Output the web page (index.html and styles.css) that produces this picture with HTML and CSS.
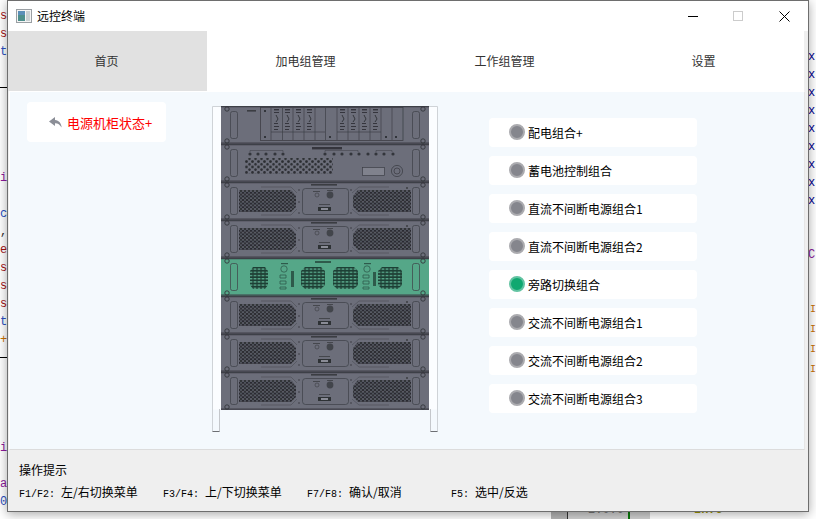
FILE: index.html
```html
<!DOCTYPE html>
<html lang="zh-CN">
  <head>
    <meta charset="UTF-8" />
    <title>远控终端</title>
    <link rel="stylesheet" href="styles.css">
  </head>
  <body>
    <!-- Editor text showing behind the window -->
    <pre class="code code-left"><span class="c-red">s
s</span>
<span class="c-blue">t</span>

<span class="c-rule"></span>




<span class="c-purple">i</span>

<span class="c-blue">c</span>
,
<span class="c-red">e
s
s
s</span>
<span class="c-blue">t</span>
<span class="c-orange">+</span>
<span class="c-rule"></span>




<span class="c-purple">i</span>

<span class="c-purple">a</span>
<span class="c-blue">0</span></pre>
    <pre class="code code-right"><span class="c-navy">x
x
x
x
x
x
x
x
x</span>


<span class="c-purple">C</span></pre>
    <pre class="code code-far"><span class="c-orange">I
I
I
I</span></pre>
    <div class="taskstrip">
      <div class="strip-gray"></div>
      <div class="strip-cell">2.0.0</div>
      <div class="strip-tail"></div>
      <div class="strip-info">Info</div>
    </div>

    <div class="window">
      <!-- Title bar -->
      <div class="titlebar">
        <svg class="app-icon" width="16" height="14" viewBox="0 0 16 14">
          <rect x="0.5" y="0.5" width="15" height="13" fill="#f4f4f4" stroke="#9a9fa3" />
          <rect x="2" y="2" width="7" height="10" fill="#4d8f8c" />
          <rect x="2" y="2" width="7" height="4" fill="#5a8fb8" />
          <rect x="10" y="2" width="4" height="10" fill="#c9d0d2" />
        </svg>
        <span class="app-title">远控终端</span>
        <div class="controls">
          <svg class="ctl-min" width="10" height="1" viewBox="0 0 10 1"><rect width="10" height="1" fill="#000" /></svg>
          <svg class="ctl-max" width="10" height="10" viewBox="0 0 10 10"><rect x="0.5" y="0.5" width="9" height="9" fill="none" stroke="#ccc" /></svg>
          <svg class="ctl-close" width="11" height="11" viewBox="0 0 11 11"><path d="M0.5 0.5L10.5 10.5M10.5 0.5L0.5 10.5" stroke="#000" fill="none" /></svg>
        </div>
      </div>

      <!-- Tabs -->
      <div class="tabs">
        <div class="tab active">首页</div>
        <div class="tab">加电组管理</div>
        <div class="tab">工作组管理</div>
        <div class="tab">设置</div>
      </div>

      <!-- Main panel -->
      <div class="main">
        <div class="back-card">
          <svg class="back-icon" width="13" height="11" viewBox="0 0 13 11">
            <path d="M6 0L0 4.6L6 9V6.3C8.8 6.2 10.8 7.6 12.6 10.6C12.4 6.2 10 3.2 6 2.9Z" fill="#8b8e97" />
          </svg>
          <span>电源机柜状态+</span>
        </div>

        <svg class="rack" width="226" height="326" viewBox="212 106 226 326">
          <defs>
            <pattern id="holes" width="4" height="3.6" patternUnits="userSpaceOnUse">
              <rect width="4" height="3.6" fill="#5a5c66" />
              <circle cx="2" cy="1.8" r="1.5" fill="none" stroke="#26282c" stroke-width="0.9" />
              <circle cx="2" cy="1.8" r="0.4" fill="#8b8d98" />
            </pattern>
            <pattern id="holes-green" width="4" height="3.2" patternUnits="userSpaceOnUse">
              <rect width="4" height="3.2" fill="#1f3f35" />
              <rect x="0.6" y="0.8" width="2.8" height="1.4" fill="#56a688" />
            </pattern>
            <pattern id="mesh" width="6" height="5.4" patternUnits="userSpaceOnUse">
              <circle cx="1.5" cy="1.35" r="1.35" fill="#2c2e33" />
              <circle cx="4.5" cy="4.05" r="1.35" fill="#2c2e33" />
            </pattern>

            <symbol id="frame" width="208" height="38" viewBox="0 0 208 38">
              <path d="M0 0.6H208M0 37.2H208" stroke="#3d3f46" stroke-width="1.2" />
              <rect x="9.5" y="5.5" width="7" height="27" rx="2" fill="none" stroke="#3d3f46" stroke-width="0.7" />
              <rect x="191.5" y="5.5" width="7" height="27" rx="2" fill="none" stroke="#3d3f46" stroke-width="0.7" />
              <g fill="none" stroke="#33353b" stroke-width="0.9">
                <circle cx="6" cy="3" r="2.2" />
                <circle cx="6" cy="35" r="2.2" />
                <circle cx="202" cy="3" r="2.2" />
                <circle cx="202" cy="35" r="2.2" />
              </g>
            </symbol>

            <symbol id="ups" width="208" height="38" viewBox="0 0 208 38">
              <use href="#frame" />
              <polygon points="18,8 70,8 75,14 75,25 70,30 18,30" fill="url(#holes)" />
              <polygon points="190,8 137,8 132,14 132,25 137,30 190,30" fill="url(#holes)" />
              <path d="M40 5H70L76 11M40 33H70L76 27M168 5H138L131 11M168 33H138L131 27" fill="none" stroke="#44464e" stroke-width="0.5" />
              <rect x="81.5" y="6.5" width="46" height="26" rx="3" fill="none" stroke="#3d3f46" stroke-width="0.7" />
              <rect x="90" y="2" width="26" height="1.6" fill="#3a3c43" />
              <circle cx="96" cy="13" r="2" fill="none" stroke="#3a3c43" stroke-width="0.6" />
              <circle cx="109" cy="13" r="3.4" fill="#43454c" />
              <rect x="92" y="9" width="7" height="1" fill="#44464d" />
              <rect x="106" y="8" width="6" height="1" fill="#44464d" />
              <rect x="98" y="22" width="11" height="1" fill="#44464d" />
              <rect x="97" y="25" width="13" height="4" fill="#2f3136" />
              <rect x="100" y="26" width="7" height="2" fill="#8a8c96" />
              <g fill="#3a3c43">
                <circle cx="78" cy="8" r="0.8" />
                <circle cx="78" cy="20" r="0.8" />
                <circle cx="78" cy="31" r="0.8" />
                <circle cx="130" cy="8" r="0.8" />
                <circle cx="130" cy="31" r="0.8" />
                <circle cx="186" cy="6" r="1" />
              </g>
            </symbol>

            <symbol id="slot" width="11" height="26" viewBox="0 0 11 26">
              <g fill="#34363c">
                <rect x="3" y="2" width="5" height="1.4" />
                <rect x="3" y="5" width="5" height="1" />
                <path d="M5 8L7 12L5 15" stroke="#34363c" stroke-width="1" fill="none" />
                <rect x="3" y="16" width="4" height="1" />
                <rect x="3" y="19" width="5" height="1" />
                <rect x="3" y="22" width="4" height="1" />
              </g>
            </symbol>
          </defs>

          <!-- Uprights and feet -->
          <rect x="212.5" y="106.5" width="225" height="303" fill="#fbfdff" />
          <path d="M212.5 431.5V106.5H437.5V431.5" fill="none" stroke="#cfd3d7" />
          <path d="M219.5 431.5V409M430.5 431.5V409" fill="none" stroke="#c4c7cb" />
          <path d="M212.5 431.5H219.5M430.5 431.5H437.5" fill="none" stroke="#6d6f73" />

          <g filter="url(#soft)">
            <rect x="221" y="106" width="208" height="304" fill="#6c6e7a" />

            <!-- Row 1: feeder modules -->
            <g transform="translate(221 106)">
              <use href="#frame" />
              <rect x="26" y="4" width="9" height="1.6" fill="#3a3c43" />
              <rect x="39.5" y="1.5" width="142.5" height="33" fill="none" stroke="#3d3f46" stroke-width="0.8" />
              <path d="M50 2V34M61.5 2V34M72 2V34M83 2V34M94 2V34M104.5 2V34M116 2V34M127 2V34M138 2V34M149 2V34M160 2V34M171 2V34" stroke="#3d3f46" stroke-width="0.7" />
              <path d="M50 26H104M116 26H160" stroke="#3d3f46" stroke-width="0.7" />
              <use href="#slot" x="50" y="1" />
              <use href="#slot" x="61" y="1" />
              <use href="#slot" x="72" y="1" />
              <use href="#slot" x="83" y="1" />
              <use href="#slot" x="116" y="1" />
              <use href="#slot" x="127" y="1" />
              <use href="#slot" x="138" y="1" />
              <use href="#slot" x="149" y="1" />
              <rect x="43" y="30" width="2" height="2" fill="#33353b" />
              <rect x="43" y="4" width="2" height="2" fill="#33353b" />
              <rect x="108" y="30" width="2" height="2" fill="#33353b" />
              <rect x="164" y="30" width="2" height="2" fill="#33353b" />
              <rect x="174" y="30" width="2" height="2" fill="#33353b" />
            </g>

            <!-- Row 2: battery control -->
            <g transform="translate(221 144)">
              <use href="#frame" />
              <rect x="91" y="3" width="30" height="2.4" fill="#34363c" />
              <path d="M29 8V6.5H62V8M104 8V6.5H137V8M155 8V6.5H171V8" fill="none" stroke="#3d3f46" stroke-width="0.5" />
              <g fill="#33353b">
                <circle cx="29" cy="10" r="1.6" />
                <circle cx="37" cy="10" r="1.6" />
                <circle cx="45" cy="10" r="1.6" />
                <circle cx="54" cy="10" r="1.6" />
                <circle cx="62" cy="10" r="1.6" />
                <circle cx="104" cy="10" r="1.6" />
                <circle cx="113" cy="10" r="1.6" />
                <circle cx="121" cy="10" r="1.6" />
                <circle cx="130" cy="10" r="1.6" />
                <circle cx="138" cy="10" r="1.6" />
                <circle cx="147" cy="10" r="1.6" />
                <circle cx="155" cy="10" r="1.6" />
                <circle cx="163" cy="10" r="1.6" />
                <circle cx="172" cy="10" r="1.6" />
              </g>
              <rect x="24" y="14" width="88" height="16" fill="url(#mesh)" />
              <rect x="141.5" y="23.5" width="22" height="8" fill="#80828d" stroke="#3d3f46" stroke-width="0.7" />
              <circle cx="176" cy="27" r="5.6" fill="none" stroke="#3d3f46" stroke-width="0.8" />
              <circle cx="176" cy="27" r="3" fill="none" stroke="#3d3f46" stroke-width="0.8" />
            </g>

            <use href="#ups" x="221" y="182" />
            <use href="#ups" x="221" y="220" />

            <!-- Row 5: the selected bypass unit -->
            <g transform="translate(221 258)">
              <rect width="208" height="38" fill="#55a788" />
              <use href="#frame" />
              <rect x="94" y="3" width="16" height="2" fill="#2f5a4c" />
              <polygon points="32,9 44,9 47,13 47,27 44,31 32,31 29,27 29,13" fill="url(#holes-green)" />
              <polygon points="84,9 100,9 104,13 104,27 100,31 84,31 80,27 80,13" fill="url(#holes-green)" />
              <polygon points="116,9 133,9 137,13 137,27 133,31 116,31 112,27 112,13" fill="url(#holes-green)" />
              <polygon points="161,9 177,9 181,13 181,27 177,31 161,31 157,27 157,13" fill="url(#holes-green)" />
              <g fill="none" stroke="#2f5a4c" stroke-width="0.8">
                <circle cx="63" cy="11" r="3.2" />
                <circle cx="146" cy="11" r="3.2" />
                <path d="M59 17h6v3h-6zM59 23h6v3h-6zM59 29h6v2h-6zM142 17h6v3h-6zM142 23h6v3h-6zM142 29h6v2h-6z" />
              </g>
              <g fill="#2f5a4c">
                <rect x="70" y="13" width="3" height="16" />
                <rect x="152" y="14" width="3" height="14" />
                <rect x="60" y="5" width="7" height="1.2" />
                <rect x="143" y="5" width="7" height="1.2" />
              </g>
            </g>

            <use href="#ups" x="221" y="296" />
            <use href="#ups" x="221" y="334" />
            <use href="#ups" x="221" y="372" />
          </g>
          <filter id="soft" x="0" y="0" width="100%" height="100%">
            <feGaussianBlur stdDeviation="0.5" />
          </filter>
        </svg>

        <div class="groups">
          <div class="group"><i class="dot"></i>配电组合+</div>
          <div class="group"><i class="dot"></i>蓄电池控制组合</div>
          <div class="group"><i class="dot"></i>直流不间断电源组合1</div>
          <div class="group"><i class="dot"></i>直流不间断电源组合2</div>
          <div class="group"><i class="dot on"></i>旁路切换组合</div>
          <div class="group"><i class="dot"></i>交流不间断电源组合1</div>
          <div class="group"><i class="dot"></i>交流不间断电源组合2</div>
          <div class="group"><i class="dot"></i>交流不间断电源组合3</div>
        </div>
      </div>

      <!-- Key hints -->
      <div class="hints">
        <div class="hints-title">操作提示</div>
        <div class="hints-row">
          <div><span class="key">F1/F2: </span>左/右切换菜单</div>
          <div><span class="key">F3/F4: </span>上/下切换菜单</div>
          <div><span class="key">F7/F8: </span>确认/取消</div>
          <div><span class="key">F5: </span>选中/反选</div>
        </div>
      </div>
    </div>
  </body>
</html>
```

FILE: styles.css
```css
/* General styles */
html,
body {
  margin: 0;
  height: 100%;
  overflow: hidden;
  background-color: #fff;
}

body {
  font-family: "Noto Sans CJK SC", "Liberation Sans", sans-serif;
  font-size: 12px;
  color: #000;
}

/* Editor text behind the window */
.code {
  position: absolute;
  margin: 0;
  font-family: "Liberation Mono", monospace;
  font-size: 12px;
  line-height: 18px;
  color: #333;
}

.code-left {
  left: 0;
  top: 7px;
}

.code-right {
  left: 808px;
  top: 48px;
}

.code-far {
  left: 810px;
  top: 300px;
  font-size: 10px;
  line-height: 20px;
}

.c-red {
  color: #a31515;
}

.c-blue {
  color: #2a4fc0;
}

.c-navy {
  color: #00008b;
}

.c-purple {
  color: #8b1a9b;
}

.c-orange {
  color: #c87000;
}

.c-rule {
  display: inline-block;
  width: 7px;
  border-bottom: 1px solid #000;
  vertical-align: middle;
}

/* Status strip peeking out under the window */
.taskstrip {
  position: absolute;
  left: 551px;
  top: 503px;
  height: 16px;
  display: flex;
}

.strip-gray {
  width: 16px;
  background-color: #b4b4b4;
  border-right: 1px solid #333;
}

.strip-cell {
  width: 62px;
  padding-left: 20px;
  box-sizing: border-box;
  background-color: #d0d0d0;
  border-right: 2px solid #0a7a0a;
  font-family: "Liberation Mono", monospace;
  font-size: 12px;
  color: #777;
}

.strip-tail {
  width: 20px;
  background-color: #d0d0d0;
}

.strip-info {
  margin-left: 44px;
  font-family: "Liberation Mono", monospace;
  font-size: 12px;
  font-weight: bold;
  color: #a09a00;
}

/* Window */
.window {
  position: absolute;
  left: 7px;
  top: 0;
  width: 802px;
  height: 512px;
  box-sizing: border-box;
  display: flex;
  flex-direction: column;
  border: 1px solid #6e6e6e;
  background-color: #efefef;
  box-shadow: 0 2px 10px rgba(0, 0, 0, 0.35);
}

/* Title bar */
.titlebar {
  height: 30px;
  flex: none;
  display: flex;
  align-items: center;
  padding-left: 8px;
  box-sizing: border-box;
  background-color: #fff;
}

.app-icon {
  margin-right: 5px;
}

.app-title {
  margin-bottom: 2px;
}

.controls {
  margin-left: auto;
  display: flex;
  align-items: center;
}

.ctl-min {
  margin-right: 35px;
}

.ctl-max {
  margin-right: 36px;
}

.ctl-close {
  margin-right: 18px;
}

/* Tabs */
.tabs {
  height: 60px;
  flex: none;
  display: flex;
  width: 796px;
  background-color: #fff;
}

.tab {
  width: 199px;
  box-sizing: border-box;
  padding: 0 2px 2px 0;
  display: flex;
  align-items: center;
  justify-content: center;
  color: #333;
}

.tab.active {
  background-color: #e1e1e1;
}

/* Main panel */
.main {
  height: 359px;
  flex: none;
  box-sizing: border-box;
  margin: 0 3px 0 1px;
  display: flex;
  align-items: flex-start;
  background-color: #f4f9fd;
  border: 1px solid #fff;
  border-bottom-color: #dcdcdc;
  border-right-color: #e6e6e6;
}

.back-card {
  width: 139px;
  height: 40px;
  margin: 10px 0 0 17px;
  flex: none;
  display: flex;
  align-items: center;
  padding-left: 22px;
  box-sizing: border-box;
  background-color: #fff;
  border-radius: 4px;
  font-size: 13px;
  color: #f00;
}

.back-icon {
  margin-right: 5px;
}

.rack {
  flex: none;
  margin: 14px 0 0 46px;
}

.groups {
  width: 208px;
  margin: 26px 0 0 51px;
  flex: none;
  display: flex;
  flex-direction: column;
  gap: 9px;
}

.group {
  height: 29px;
  display: flex;
  align-items: center;
  padding-left: 20px;
  background-color: #fff;
  border-radius: 4px;
}

.dot {
  width: 16px;
  height: 16px;
  margin: 0 3px 2px 0;
  box-sizing: border-box;
  border: 2px solid #ababaf;
  border-radius: 50%;
  background-color: #85868d;
}

.dot.on {
  border-color: #62c3a2;
  background-color: #10a870;
}

/* Key hints */
.hints {
  flex: 1;
  padding: 12px 0 0 11px;
  line-height: 16px;
}

.hints-row {
  margin-top: 6px;
  display: grid;
  grid-template-columns: repeat(4, 144px);
}

.key {
  font-family: "Liberation Mono", monospace;
  font-size: 10px;
}
```
